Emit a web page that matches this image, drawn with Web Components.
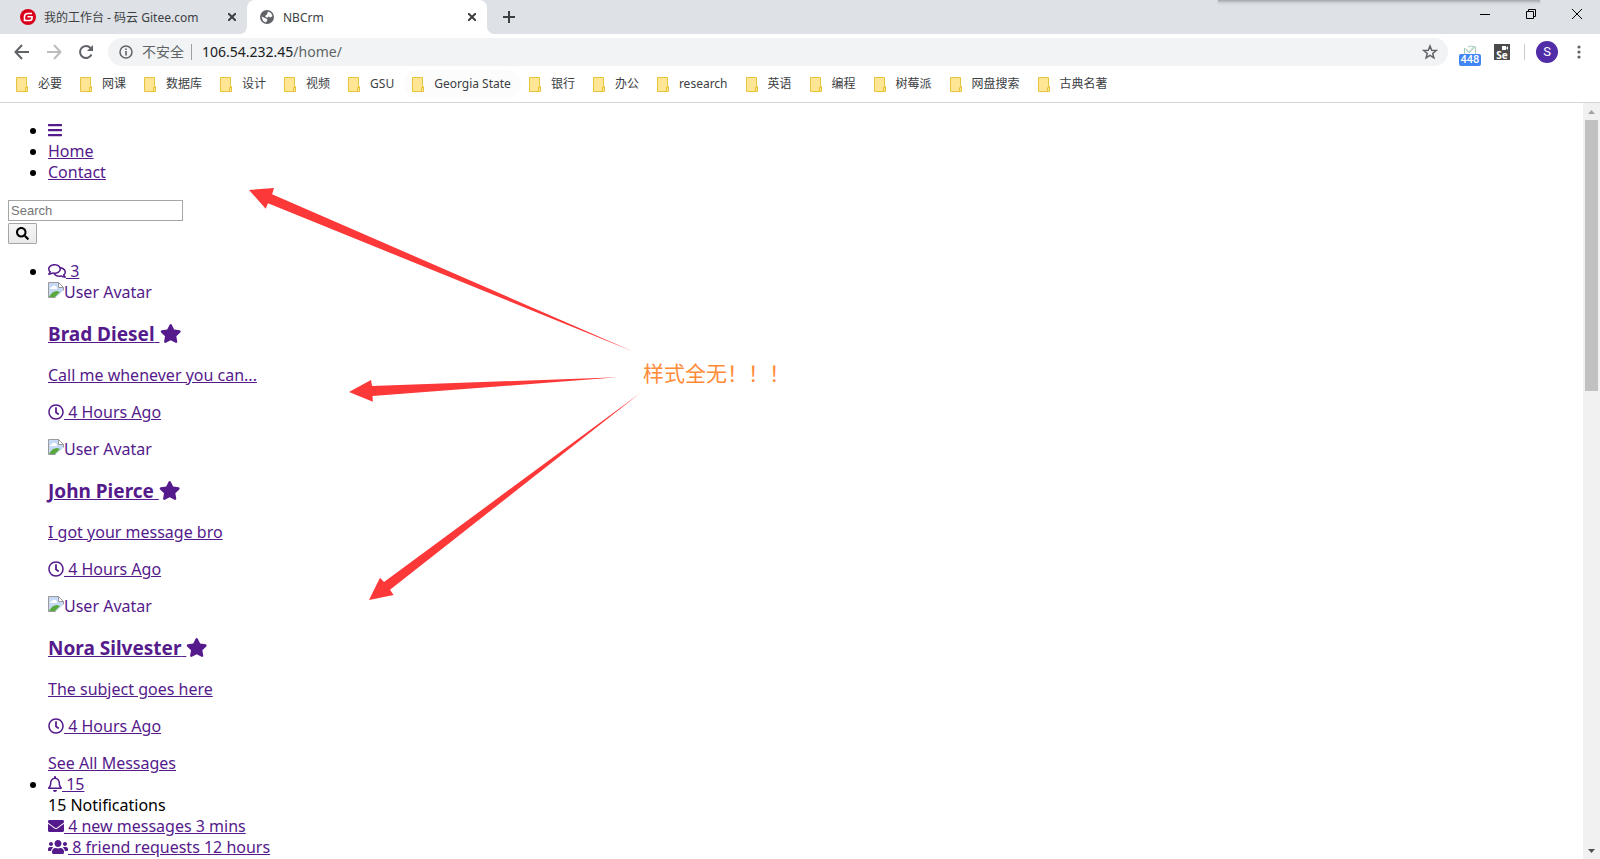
<!DOCTYPE html>
<html lang="zh-CN">
<head>
<meta charset="utf-8">
<title>NBCrm</title>
<style>
  html, body { height: 100%; }
  body { margin: 0; background: #fff; overflow: hidden; font-family: "Noto Sans", "Noto Sans CJK SC", sans-serif; }
</style>
</head>
<body>
<browser-window>
  <browser-tabs slot="tabs">
    <browser-tab icon="gitee">我的工作台 - 码云 Gitee.com</browser-tab>
    <browser-tab icon="globe" active>NBCrm</browser-tab>
  </browser-tabs>
  <browser-toolbar slot="toolbar" host="106.54.232.45" path="/home/"></browser-toolbar>
  <bookmarks-bar slot="bookmarks">
    <bookmark-item>必要</bookmark-item><bookmark-item>网课</bookmark-item><bookmark-item>数据库</bookmark-item><bookmark-item>设计</bookmark-item><bookmark-item>视频</bookmark-item><bookmark-item>GSU</bookmark-item><bookmark-item hot>Georgia State</bookmark-item><bookmark-item>银行</bookmark-item><bookmark-item>办公</bookmark-item><bookmark-item>research</bookmark-item><bookmark-item>英语</bookmark-item><bookmark-item>编程</bookmark-item><bookmark-item>树莓派</bookmark-item><bookmark-item>网盘搜索</bookmark-item><bookmark-item>古典名著</bookmark-item>
  </bookmarks-bar>
  <crm-page></crm-page>
  <arrow-notes slot="notes">样式全无！！！</arrow-notes>
  <scroll-bar slot="scroll"></scroll-bar>
</browser-window>

<script>
const define = (name, html, setup) => {
  const t = document.createElement('template');
  t.innerHTML = html;
  customElements.define(name, class extends HTMLElement {
    constructor() {
      super();
      this.attachShadow({ mode: 'open' }).append(t.content.cloneNode(true));
    }
    connectedCallback() { if (setup) setup(this, this.shadowRoot); }
  });
};

/* Solid and outline glyphs used in the page: [width in 512ths, path] */
const GLYPHS = {
  bars: [448, 'M16 132h416c8.8 0 16-7.2 16-16V76c0-8.8-7.2-16-16-16H16C7.2 60 0 67.2 0 76v40c0 8.8 7.2 16 16 16zm0 160h416c8.8 0 16-7.2 16-16v-40c0-8.8-7.2-16-16-16H16c-8.8 0-16 7.2-16 16v40c0 8.8 7.2 16 16 16zm0 160h416c8.8 0 16-7.2 16-16v-40c0-8.8-7.2-16-16-16H16c-8.8 0-16 7.2-16 16v40c0 8.8 7.2 16 16 16z'],
  search: [512, 'M505 442.7L405.3 343c-4.5-4.5-10.6-7-17-7H372c27.6-35.3 44-79.7 44-128C416 93.1 322.9 0 208 0S0 93.1 0 208s93.1 208 208 208c48.3 0 92.7-16.4 128-44v16.3c0 6.4 2.5 12.5 7 17l99.7 99.7c9.4 9.4 24.6 9.4 33.9 0l28.3-28.3c9.4-9.4 9.4-24.6.1-34zM208 336c-70.7 0-128-57.2-128-128 0-70.7 57.2-128 128-128 70.7 0 128 57.2 128 128 0 70.7-57.2 128-128 128z'],
  star: [576, 'M259.3 17.8L194 150.2 47.9 171.5c-26.2 3.8-36.7 36.1-17.7 54.6l105.7 103-25 145.5c-4.5 26.3 23.2 46 46.4 33.7L288 439.6l130.7 68.7c23.2 12.2 50.9-7.4 46.4-33.7l-25-145.5 105.7-103c19-18.5 8.5-50.8-17.7-54.6L382 150.2 316.7 17.8c-11.7-23.6-45.6-23.9-57.4 0z'],
  clock: [512, 'M256 8C119 8 8 119 8 256s111 248 248 248 248-111 248-248S393 8 256 8zm0 448c-110.5 0-200-89.5-200-200S145.5 56 256 56s200 89.5 200 200-89.5 200-200 200zm61.8-104.4l-84.9-61.7c-3.1-2.3-4.9-5.9-4.9-9.7V116c0-6.6 5.4-12 12-12h32c6.6 0 12 5.4 12 12v141.7l66.8 48.6c5.4 3.9 6.5 11.4 2.6 16.8L334.6 349c-3.9 5.3-11.4 6.5-16.8 2.6z'],
  bell: [448, 'M439.4 362.3c-19.3-20.8-55.5-52-55.5-154.3 0-77.7-54.5-139.9-127.9-155.2V32c0-17.7-14.3-32-32-32s-32 14.3-32 32v20.8C118.6 68.1 64.1 130.3 64.1 208c0 102.3-36.2 133.5-55.5 154.3-6 6.5-8.7 14.2-8.6 21.7.1 16.4 13 32 32.1 32h383.8c19.1 0 32-15.6 32.1-32 .1-7.6-2.6-15.3-8.6-21.7zM67.5 368c21.2-28 44.4-74.3 44.5-159.4V208c0-61.9 50.1-112 112-112s112 50.1 112 112v.6c.1 85.1 23.3 131.5 44.5 159.4H67.5zM224 512c35.3 0 64-28.7 64-64H160c0 35.4 28.7 64 64 64z'],
  envelope: [512, 'M502.3 190.8c3.9-3.1 9.7-.2 9.7 4.7V400c0 26.5-21.5 48-48 48H48c-26.5 0-48-21.5-48-48V195.6c0-5 5.7-7.8 9.7-4.7 22.4 17.4 52.1 39.5 154.1 113.6 21.1 15.4 56.7 47.8 92.2 47.6 35.7.3 72-32.8 92.3-47.6 102-74.1 131.6-96.3 154-113.7zM256 320c23.2.4 56.6-29.2 73.4-41.4 132.7-96.3 142.8-104.7 173.4-128.7 5.8-4.5 9.2-11.5 9.2-18.9v-19c0-26.5-21.5-48-48-48H48c-26.5 0-48 21.5-48 48v19c0 7.4 3.4 14.3 9.2 18.9 30.6 23.9 40.7 32.4 173.4 128.7 16.8 12.2 50.2 41.8 73.4 41.4z'],
  users: [640, 'M96 224c35.3 0 64-28.7 64-64s-28.7-64-64-64-64 28.7-64 64 28.7 64 64 64zm448 0c35.3 0 64-28.7 64-64s-28.7-64-64-64-64 28.7-64 64 28.7 64 64 64zm32 32h-64c-17.6 0-33.5 7.1-45.1 18.6 40.3 22.1 68.9 62 75.1 109.4h66c17.7 0 32-14.3 32-32v-32c0-35.3-28.7-64-64-64zm-256 0c61.9 0 112-50.1 112-112S381.9 32 320 32 208 82.1 208 144s50.1 112 112 112zm76.8 32h-8.3c-20.8 10-43.9 16-68.5 16s-47.6-6-68.5-16h-8.3C179.6 288 128 339.6 128 403.2V432c0 26.5 21.5 48 48 48h288c26.5 0 48-21.5 48-48v-28.8c0-63.6-51.6-115.2-115.2-115.2zm-223.7-13.4C161.5 263.1 145.6 256 128 256H64c-35.3 0-64 28.7-64 64v32c0 17.7 14.3 32 32 32h65.9c6.3-47.4 34.9-87.3 75.2-109.4z'],
  comments: [576, 'M532 386.2c27.5-27.1 44-61.1 44-98.2 0-80-76.5-146.1-176.2-157.9C368.3 72.5 294.3 32 208 32 93.1 32 0 103.6 0 192c0 37 16.5 71 44 98.2-15.3 30.7-37.3 54.5-37.7 54.9-6.3 6.7-8.1 16.5-4.4 25 3.6 8.5 12 14 21.2 14 53.5 0 96.7-20.2 125.2-38.8 9.2 2.1 18.7 3.7 28.4 4.9C208.1 407.6 281.8 448 368 448c20.8 0 40.8-2.4 59.8-6.8C456.3 459.7 499.4 480 553 480c9.2 0 17.5-5.5 21.2-14 3.6-8.5 1.9-18.3-4.4-25-.4-.3-22.5-24.1-37.8-54.8zm-392.8-92.3L122.1 305c-14.1 9.1-28.5 16.3-43.1 21.4 2.7-4.7 5.4-9.7 8-14.8l15.5-31.1L77.7 256C64.2 242.6 48 220.7 48 192c0-60.7 73.3-112 160-112s160 51.3 160 112-73.3 112-160 112c-16.5 0-33-1.9-49-5.6l-19.8-4.5zM498.3 352l-24.7 24.4 15.5 31.1c2.6 5.1 5.3 10.1 8 14.8-14.6-5.1-29-12.3-43.1-21.4l-17.1-11.1-19.9 4.6c-16 3.7-32.5 5.6-49 5.6-54 0-102.2-20.1-131.3-49.7C338 339.5 416 272.9 416 192c0-3.4-.4-6.7-.7-10C479.7 196.5 528 238.8 528 288c0 28.7-16.2 50.6-29.7 64z']
};
define('glyph-icon', `
<style>
  :host { display: inline-block; vertical-align: -2px; line-height: 0; }
  svg { height: var(--glyph, 16px); fill: currentColor; display: block; }
</style><svg aria-hidden="true"><path/></svg>`, (el, root) => {
  const [w, d] = GLYPHS[el.getAttribute('name')];
  root.querySelector('svg').setAttribute('viewBox', `0 0 ${w} 512`);
  root.querySelector('path').setAttribute('d', d);
});

define('browser-window', `
<style>
  :host { display: grid; grid-template-rows: 34px auto auto minmax(0, 1fr); height: 100vh; }
  .view { display: grid; grid-template-columns: minmax(0, 1fr) 17px; position: relative; border-top: 1px solid #d6d6d6; min-height: 0; overflow: hidden; }
  main { min-height: 0; overflow: hidden; }
</style>
<slot name="tabs"></slot><slot name="toolbar"></slot><slot name="bookmarks"></slot>
<div class="view"><main><slot></slot></main><slot name="scroll"></slot><slot name="notes"></slot></div>`);

define('browser-tabs', `
<style>
  :host { display: flex; align-items: stretch; background: #dee1e6; position: relative; }
  button { border: 0; background: none; padding: 0; display: grid; place-items: center; }
  .add { width: 44px; }
  .controls { margin-left: auto; display: flex; height: 28px; }
  .controls button { width: 46px; }
  .edge { position: absolute; top: 0; right: 60px; width: 322px; height: 3px; background: linear-gradient(#a2a4a8, #d2d5d9); box-shadow: 0 0 3px #bfc2c6; }
</style>
<div class="edge"></div>
<slot></slot>
<button class="add" aria-label="New tab"><svg width="14" height="14" stroke="#3c4043" stroke-width="2"><path d="M7 1v12M1 7h12"/></svg></button>
<div class="controls">
  <button aria-label="Minimize"><svg width="10" height="10"><path d="M0 5h10v1H0z"/></svg></button>
  <button aria-label="Restore"><svg width="10" height="10" fill="none" stroke="#000"><path d="M.5 2.5h7v7h-7zM2.5 2.5v-2h7v7h-2"/></svg></button>
  <button aria-label="Close"><svg width="10" height="10" stroke="#000"><path d="M0 0l10 10M10 0L0 10"/></svg></button>
</div>`);

const FAVICONS = {
  gitee: '<circle cx="8" cy="8" r="8" fill="#d9001b"/><path d="M12 4.500H7.500a3 3 0 0 0-3 3v4h5a2.500 2.500 0 0 0 2.500-2.500V7.800H7.500" fill="none" stroke="#fff" stroke-width="1.600"/>',
  globe: '<circle cx="8" cy="8" r="7" fill="#5f6368"/><path d="M9 2.500L12 4l1.500 3-2 1.500-2-1L8 9 6 7l2-1.500zM2.500 7.500L6 9l2.500 1.500L7 13.500 4 12z" fill="#fff"/>'
};
define('browser-tab', `
<style>
  :host { box-sizing: border-box; display: flex; align-items: center; width: 247px; padding: 0 8px 0 20px; color: #3c4043; font-size: 12px; line-height: 18px; white-space: nowrap; }
  :host([active]) { position: relative; width: 240px; padding-left: 12px; background: #fff; border-radius: 8px 8px 0 0; }
  :host([active])::before, :host([active])::after { content: ""; position: absolute; bottom: 0; width: 8px; height: 8px; }
  :host([active])::before { left: -8px; background: radial-gradient(circle at 0 0, transparent 8px, #fff 8px); }
  :host([active])::after { right: -8px; background: radial-gradient(circle at 100% 0, transparent 8px, #fff 8px); }
  .icon { flex: none; width: 16px; height: 16px; margin-right: 8px; }
  .title { flex: 1; overflow: hidden; padding-top: 2px; }
  button { border: 0; background: none; padding: 0; width: 14px; height: 14px; display: grid; place-items: center; }
</style>
<svg class="icon" aria-hidden="true"></svg><span class="title"><slot></slot></span>
<button aria-label="Close tab"><svg width="8" height="8" stroke="#3c4043" stroke-width="2"><path d="M0 0l8 8M8 0L0 8"/></svg></button>`,
(el, root) => { root.querySelector('.icon').innerHTML = FAVICONS[el.getAttribute('icon')]; });

define('browser-toolbar', `
<style>
  :host { display: flex; align-items: center; height: 36px; padding: 0 5px 0 6px; background: #fff; font-size: 14px; line-height: 20px; color: #5f6368; }
  button { border: 0; background: none; padding: 0; width: 32px; height: 28px; display: grid; place-items: center; color: inherit; font: inherit; }
  .box { flex: 1; display: flex; align-items: center; height: 28px; margin: 0 6px; padding: 0 2px 0 11px; border-radius: 14px; background: #f1f3f4; }
  .box span { white-space: nowrap; }
  .safe { margin: 0 7px 0 9px; }
  .bar { width: 1px; height: 16px; background: #9aa0a6; margin-right: 10px; }
  b { font-weight: 400; color: #202124; }
  .url { flex: 1; }
  .ext { position: relative; }
  .ext svg { margin-bottom: 5px; }
  .badge { position: absolute; left: 5px; top: 16px; width: 22px; height: 12px; border-radius: 2px; background: #4285f4; color: #fff; font: 500 11px/12px Roboto, sans-serif; text-align: center; }
  .se { width: 16px; height: 16px; margin: 0 14px 0 8px; background: #4b4b4b; color: #fff; font: 700 10px/10px "Open Sans", sans-serif; display: grid; place-items: end center; position: relative; }
  .se svg { position: absolute; right: 2px; top: 2px; }
  .sep { width: 1px; height: 16px; background: #c8cacd; margin-right: 11px; }
  .me { width: 22px; height: 22px; border-radius: 50%; background: #512da8; color: #fff; font: 13px/22px Roboto, sans-serif; }
  .menu { width: 32px; margin: 0 0 0 5px; }
</style>
<button aria-label="Back"><svg width="16" height="16" fill="none" stroke="currentColor" stroke-width="2"><path d="M15 8H2M8 1L1.500 8 8 15"/></svg></button>
<button aria-label="Forward"><svg width="16" height="16" fill="none" stroke="#babcbe" stroke-width="2"><path d="M1 8h13M8 1l6.500 7L8 15"/></svg></button>
<button aria-label="Reload"><svg width="16" height="16" fill="none" stroke="currentColor" stroke-width="2"><path d="M13.500 10.500A6 6 0 1 1 12.500 4"/><path d="M15 1v6H9z" fill="currentColor" stroke="none"/></svg></button>
<div class="box">
  <svg width="14" height="14" fill="none" stroke="currentColor" aria-hidden="true"><circle cx="7" cy="7" r="6" stroke-width="1.500"/><path d="M7 6v4.500M7 3.500V5" stroke-width="1.600"/></svg>
  <span class="safe">不安全</span><i class="bar"></i><span class="url"><b></b><span class="path"></span></span>
  <button aria-label="Bookmark"><svg width="16" height="16" fill="none" stroke="currentColor" stroke-width="1.500"><path d="M8 2l1.700 4.200 4.500.3-3.500 2.900 1.200 4.400L8 11.400l-3.900 2.400 1.200-4.400L1.800 6.500l4.500-.3z"/></svg></button>
</div>
<button class="ext" aria-label="Extension"><svg width="14" height="10" fill="none" stroke="#a5cbbb"><path d="M1.500 9V3l4 4 5-5h2v7M5 2q3-2 7 0M3 4l3 4 5-5"/></svg><span class="badge">448</span></button>
<div class="se"><svg width="6" height="4" fill="#fff" aria-hidden="true"><path d="M0 0h4v4H0zM4 2l2-2v4z"/></svg>Se</div>
<i class="sep"></i>
<button class="me">S</button>
<button class="menu" aria-label="Menu"><svg width="4" height="16" fill="currentColor"><circle cx="2" cy="3" r="1.600"/><circle cx="2" cy="8" r="1.600"/><circle cx="2" cy="13" r="1.600"/></svg></button>`,
(el, root) => {
  root.querySelector('b').textContent = el.getAttribute('host');
  root.querySelector('.path').textContent = el.getAttribute('path');
});

define('bookmarks-bar', `
<style>:host { display: flex; align-items: flex-start; height: 32px; padding: 0 8px; background: #fff; }</style><slot></slot>`);
define('bookmark-item', `
<style>
  :host { display: block; flex: none; }
  a { display: flex; align-items: center; gap: 10px; height: 28px; padding: 0 10px 0 8px; border-radius: 14px; color: #3c4043; font-size: 12px; line-height: 18px; text-decoration: none; white-space: nowrap; }
  :host([hot]) a { background: #fcfcfc; }
</style>
<a href="#"><svg width="12" height="15" aria-hidden="true"><path d="M.5.5h10v9h1v5H.5z" fill="#ffe694" stroke="#e8c33c"/><path d="M9.500 14V10.500h2" fill="none" stroke="#e8c33c"/></svg><slot></slot></a>`);

/* Scroll track with its two arrows; the thumb takes 3/8 of the track */
define('scroll-bar', `
<style>
  :host { display: flex; flex-direction: column; background: #f1f1f1; }
  button { border: 0; background: none; padding: 0; height: 17px; display: grid; place-items: center; }
  .thumb { flex: 3; margin: 0 2px; background: #c1c1c1; }
  .rest { flex: 5; }
</style>
<button aria-label="Scroll up"><svg width="7" height="4" fill="#a3a3a3"><path d="M0 4L3.500 0 7 4z"/></svg></button>
<div class="thumb"></div><div class="rest"></div>
<button aria-label="Scroll down"><svg width="7" height="4" fill="#505050"><path d="M0 0h7L3.500 4z"/></svg></button>`);

/* Annotation drawn over the page */
define('arrow-notes', `
<style>
  :host { position: absolute; left: 240px; top: 77px; pointer-events: none; color: #ff8b37; font-size: 21px; line-height: 30px; }
  svg { display: block; }
  .text { position: absolute; left: 403px; top: 177px; white-space: nowrap; font-family: "Noto Sans CJK SC", sans-serif; }
</style>
<svg width="410" height="430" viewBox="240 180 410 430" fill="#fc3838" aria-hidden="true">
  <path d="M249 190L274 188l-1.900 6.200 361 157.200L268 203.300l-2.300 5.400z"/>
  <path d="M349 392l22-12 1.100 6 245.400-8.700L372.500 396l.4 5.700z"/>
  <path d="M369 600l11-22.300 4 4.300 256-188.700-250 196.400 3.600 5.300z"/>
</svg>
<span class="text"><slot></slot></span>`);

define('user-message', `
<style>
  :host { display: block; }
  a { display: block; color: #551a8b; }
  .avatar { display: inline-flex; align-items: flex-start; vertical-align: top; height: 21px; }
  .avatar svg { flex: none; }
  h3 { margin: 19px 0 18px; font-size: 19px; line-height: 25px; --glyph: 19px; }
  p { margin: 16px 0; }
</style>
<a href="#">
  <span class="avatar"><svg width="16" height="16" aria-hidden="true"><path d="M.5.500h10l5 5v10H.5z" fill="#c6d9f7" stroke="#9a9a9a"/><path d="M2 7q0-2 2-2 1-2 3-1 2 0 2 3z" fill="#fff"/><path d="M1 15q3-6 8-6l3 1-5 5z" fill="#59a83b"/><path d="M16 8v8H7z" fill="#fff"/><path d="M10.500.5v5h5z" fill="#fff" stroke="#9a9a9a"/></svg>User Avatar</span>
  <h3><slot name="name"></slot> <glyph-icon name="star"></glyph-icon></h3>
  <p><slot></slot></p>
  <p><glyph-icon name="clock"></glyph-icon> 4 Hours Ago</p>
</a>`);

define('crm-page', `
<style>
  :host { display: block; padding: 1px 8px 0; color: #000; font-size: 16px; line-height: 21px; }
  ul { margin: 16px 0; padding-left: 40px; }
  a { color: #551a8b; }
  form { display: flex; flex-direction: column; align-items: flex-start; gap: 2px; padding: 1px 0; }
  input { box-sizing: border-box; width: 175px; height: 21px; margin: 0; padding: 1px 2px; border: 1px solid #a6a6a6; font: 13px/17px "Liberation Sans", sans-serif; }
  input::placeholder { color: #757575; }
  button { box-sizing: border-box; width: 29px; height: 21px; padding: 0; border: 1px solid #a6a6a6; border-radius: 1px; background: linear-gradient(#f6f6f6, #e9e9e9); color: #000; display: grid; place-items: center; --glyph: 13px; }
  .row { display: block; }
</style>
<ul>
  <li><a href="#" aria-label="Menu"><glyph-icon name="bars"></glyph-icon></a></li>
  <li><a href="#">Home</a></li>
  <li><a href="#">Contact</a></li>
</ul>
<form><input type="search" placeholder="Search" aria-label="Search"><button type="button" aria-label="Search"><glyph-icon name="search"></glyph-icon></button></form>
<ul>
  <li><a href="#"><glyph-icon name="comments"></glyph-icon> 3</a>
    <user-message><span slot="name">Brad Diesel</span>Call me whenever you can...</user-message>
    <user-message><span slot="name">John Pierce</span>I got your message bro</user-message>
    <user-message><span slot="name">Nora Silvester</span>The subject goes here</user-message>
    <a href="#">See All Messages</a></li>
  <li><a href="#"><glyph-icon name="bell"></glyph-icon> 15</a>
    <span class="row">15 Notifications</span>
    <span class="row"><a href="#"><glyph-icon name="envelope"></glyph-icon> 4 new messages 3 mins</a></span>
    <span class="row"><a href="#"><glyph-icon name="users"></glyph-icon> 8 friend requests 12 hours</a></span></li>
</ul>`);
</script>
</body>
</html>
